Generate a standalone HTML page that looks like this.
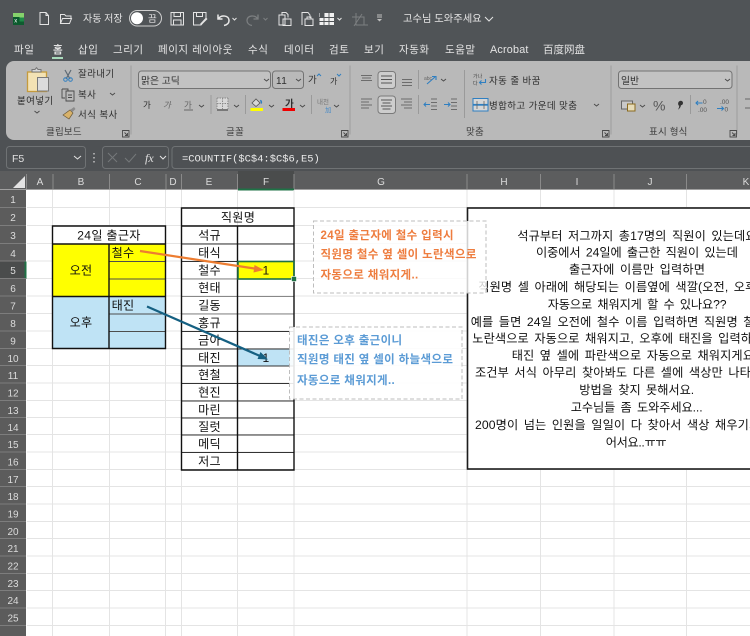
<!DOCTYPE html>
<html lang="ko"><head><meta charset="utf-8"><title>Excel</title>
<style>
html,body{margin:0;padding:0;background:#fff;width:750px;height:636px;overflow:hidden}
svg{display:block;filter:blur(.3px)}
text{font-family:"Liberation Sans","Noto Sans CJK KR",sans-serif;}
.t{fill:#e4e4e4;font-size:10.5px}
.tb{letter-spacing:.55px}
.r{fill:#2e2e2e;font-size:9.5px;letter-spacing:.4px}
.g{fill:#3c3c3c;font-size:9.5px;letter-spacing:.2px}
.h{fill:#dcdcdc;font-size:10px;text-anchor:middle}
.c{fill:#111;font-size:12.1px;letter-spacing:.3px;text-anchor:middle}
.b{fill:#111;font-size:12.2px;letter-spacing:.1px;word-spacing:2px}
.o{fill:#ee7d3f;font-size:11.5px;letter-spacing:.35px;font-weight:700}
.s{fill:#5b9bd5;font-size:11.5px;letter-spacing:.35px;font-weight:700}
.i{fill:none;stroke:#e4e4e4;stroke-width:1}
.k{fill:none;stroke:#4a4a4a;stroke-width:.9}
.d{font-size:6.5px;fill:#555}
</style></head><body>
<svg xmlns="http://www.w3.org/2000/svg" width="750" height="636" viewBox="0 0 750 636">
<rect width="750" height="636" fill="#fff"/>
<!-- title bar -->
<rect width="750" height="146" fill="#505457"/>
<rect x="13" y="13" width="11" height="4.500" fill="#86d26c"/><rect x="13" y="17.500" width="11" height="4" fill="#1f8a48"/><rect x="13" y="21.500" width="11" height="3.500" fill="#0e5c2f"/>
<rect x="13" y="17" width="6.500" height="6.500" fill="#0a5a2c"/>
<text x="14.300" y="22.500" style="font-size:6px;fill:#fff">x</text>
<path class="i" d="M40 12.500h6l2.500 3v9H40zM46 12.500v3h2.500"/>
<path class="i" d="M60.500 23.500v-9h4l1.500 1.500h5v2M60.500 23.500l2-5h9l-2 5z"/>
<text class="t" x="83" y="22" style="font-size:10px">자동 저장</text>
<rect x="129.500" y="10.500" width="32" height="15.500" rx="7.700" fill="none" stroke="#cfcfcf"/>
<circle cx="137" cy="18.300" r="6" fill="#fff"/>
<text class="t" x="148" y="22" style="font-size:9.500px">끔</text>
<path class="i" d="M171 12.500h12.500v12.500H171zM174 12.500v4h6.500v-4M173.500 25v-5h7.500v5"/>
<path class="i" d="M193.500 12.500h12.500v6l-5 6.500h-7.500zM196.500 12.500v4h6v-4"/><path d="M200 24l6-6.500 1.500 1.500-6 6z" fill="#e4e4e4"/>
<path d="M218 14.500v4.500h4.500M218.500 18.500c3-4 10-3 10.500 1.500 .2 3-2 5-5 5.500" fill="none" stroke="#e8e8e8" stroke-width="1.500"/>
<path class="i" d="M232.500 18l2 2 2-2"/>
<path d="M258 14.500v4.500h-4.500M257.500 18.500c-3-4-10-3-10.500 1.500 -.2 3 2 5 5 5.500" fill="none" stroke="#7c7f81" stroke-width="1.300"/>
<path d="M263.500 18l2 2 2-2" fill="none" stroke="#7c7f81"/>
<path class="i" d="M279 15h6v10h-6zM282 15v-2.500h4l2 2v3M283 19h8v6.500h-8z" stroke-width="1.200"/>
<path class="i" d="M302 25v-12.500h6l2 2.500v3M305 19h8v6.500h-8zM307 19v-2h4v2" stroke-width="1.200"/>
<rect x="319.500" y="13" width="14.500" height="12" fill="#f0f0f0"/><path d="M319 17.500h15M319 21.500h15M324 13v12M329 13v12" stroke="#505457" stroke-width=".9"/><path d="M320 13h4v4h-4z" fill="#505457"/>
<path class="i" d="M337.500 18l2 2 2-2"/>
<path d="M352 17h12v8M356 13v12h12M362 14l-8 12" fill="none" stroke="#7c7f81"/>
<path d="M377 15h5M377 17h5" stroke="#bfbfbf"/><path d="M377 19h5l-2.500 2.500z" fill="#bfbfbf"/>
<text class="t" x="403" y="22" style="font-size:10.300px">고수님 도와주세요</text>
<path class="i" d="M485 17l4 4 4-4" stroke-width="1.100"/>
<!-- tabs -->
<g>
<text class="t tb" x="14" y="53">파일</text><text class="t" x="53" y="53" style="font-weight:700">홈</text><text class="t tb" x="78" y="53">삽입</text><text class="t tb" x="113" y="53">그리기</text><text class="t tb" x="158" y="53">페이지 레이아웃</text><text class="t tb" x="248" y="53">수식</text><text class="t tb" x="284" y="53">데이터</text><text class="t tb" x="329" y="53">검토</text><text class="t tb" x="364" y="53">보기</text><text class="t tb" x="399" y="53">자동화</text><text class="t tb" x="445" y="53">도움말</text><text class="t tb" x="490" y="53" style="font-size:10.800px;letter-spacing:.2px">Acrobat</text><text class="t" x="543" y="53" style="font-family:'Noto Sans CJK SC',sans-serif">百度网盘</text>
</g>
<rect x="52" y="57" width="11" height="2" fill="#a8dabb"/>
<!-- ribbon -->
<path d="M750 61H14a8 8 0 0 0-8 8v63a8 8 0 0 0 8 8h736z" fill="#b9b9b9"/>
<path d="M131 65.500v69M350 65.500v69M611 65.500v69M737 65.500v69" stroke="#a2a2a2" stroke-width="1.200"/>
<path d="M464.500 70v48M211 95v19M245.500 95v19M311.500 95v19M418.500 70v19M418.500 95v19M690.500 95v19" stroke="#9a9a9a"/>
<!-- clipboard -->
<rect x="27.500" y="72" width="19" height="19.500" fill="#f3e2b4" stroke="#c59b3d" stroke-width="1.300"/>
<path d="M32 72v-2.500h3l1.500-1.800 1.500 1.800h3V72z" fill="#d9d9d9" stroke="#777"/>
<rect x="37.500" y="77.500" width="11" height="13.500" fill="#dcdcdc" stroke="#7a7a7a"/>
<text class="r" x="17" y="104">붙여넣기</text>
<path class="k" d="M34.500 111l2.500 2 2.500-2"/>
<path d="M65 70l5 9M71 70l-5 9" stroke="#5d6a75" stroke-width="1.200"/><circle cx="65.500" cy="79.500" r="1.800" fill="none" stroke="#2f7fc1"/><circle cx="70.500" cy="79.500" r="1.800" fill="none" stroke="#2f7fc1"/>
<text class="r" x="78" y="77">잘라내기</text>
<path class="k" d="M62 89h6v2M62 89v9h3M66 91h8v10h-8zM68 95h4M68 97.500h4"/>
<text class="r" x="78" y="98">복사</text>
<path class="k" d="M110 93l2.500 2 2.500-2"/>
<path d="M63 115l7-5 3 3-4 6z" fill="#d8b26a" stroke="#6b5a3a" stroke-width=".7"/><path d="M70 110l4-3 1.500 2-3 3z" fill="#8b8b8b"/>
<text class="r" x="78" y="118">서식 복사</text>
<text class="g" x="46" y="135">클립보드</text>
<path class="k" d="M122.500 130.500h6.500v6.500h-6.500zM124.500 132.500l3 3M127.500 133v2.500H125"/>
<!-- font -->
<rect x="138.500" y="71" width="132" height="17.500" rx="3" fill="#c2c2c2" stroke="#737373"/>
<text class="r" x="141" y="84" style="font-size:9.800px;letter-spacing:0">맑은 고딕</text><path class="k" d="M264 79l2.500 2 2.500-2"/>
<rect x="272.500" y="71" width="31" height="17.500" rx="3" fill="#b9b9b9" stroke="#737373"/>
<text class="r" x="276" y="84" style="font-size:10px">11</text><path class="k" d="M296 79l2.500 2 2.500-2"/>
<text class="r" x="308" y="83" style="font-size:9.500px">가</text><path d="M317 76l2-2 2 2" fill="none" stroke="#2f7fc1"/>
<text class="r" x="330" y="84" style="font-size:8px">가</text><path d="M337 74l2 2 2-2" fill="none" stroke="#2f7fc1"/>
<text class="r" x="143" y="108" style="font-size:8.500px">가</text>
<text class="r" x="163" y="108" style="font-size:8.500px;font-style:italic;fill:#666">가</text>
<text class="r" x="184" y="108" style="font-size:8.500px;fill:#666">가</text><path d="M184 110h9" stroke="#666"/>
<path class="k" d="M199 105l2.500 2 2.500-2M234 105l2.500 2 2.500-2M269 105l2.500 2 2.500-2M300 105l2.500 2 2.500-2M334 105l2.500 2 2.500-2"/>
<rect x="217" y="98" width="11" height="11" fill="#d8d8d8"/><path d="M217 98h11M217 103.500h11M222.500 98v11M217 98v11M228 98v11" stroke="#8a8a8a" stroke-dasharray="1.500 1" fill="none"/><path d="M217 110h11" stroke="#555" stroke-width="1.300"/>
<path d="M252 103l4-4 4 4-4 3.500z" fill="#d8d8d8" stroke="#555" stroke-width=".8"/><path d="M260 100a1.500 2 0 1 1 1 4z" fill="#2f7fc1"/><rect x="250.500" y="108" width="12.500" height="3" fill="#ffff00"/>
<text class="r" x="285" y="107" style="font-size:9.500px;font-weight:700">가</text><rect x="282.500" y="108" width="12.500" height="3" fill="#f00000"/>
<text x="317" y="104" style="font-size:6.500px;fill:#777">내천</text><text x="325" y="112" style="font-size:6.500px;fill:#4b8bc5">加</text>
<text class="g" x="226" y="135">글꼴</text>
<path class="k" d="M341.500 130.500h6.500v6.500h-6.500zM343.500 132.500l3 3M346.500 133v2.500H344"/>
<!-- align -->
<path d="M361 75.500h11M362 78h9M361 80.500h11" stroke="#6c6c6c"/>
<rect x="378" y="71.500" width="17.500" height="17" rx="3" fill="#cdcdcd" stroke="#7a7a7a"/><path d="M381 76h11M381 79.500h11M381 83h11" stroke="#555"/>
<path d="M402 79.500h10M402 82.500h10M402 85.500h10" stroke="#6c6c6c"/>
<path d="M427 84l8-7M432 76.500h4v3.500" fill="none" stroke="#2f7fc1" stroke-width="1.100"/><text x="424" y="80" style="font-size:5px;fill:#666">abc</text><path class="k" d="M441 79l2.500 2 2.500-2"/>
<path d="M361 99h11M361 102h8M361 105h11M361 108h8" stroke="#6c6c6c"/>
<rect x="378" y="96" width="17.500" height="17.500" rx="3" fill="#cdcdcd" stroke="#7a7a7a"/><path d="M381 100h11M382.500 103h8M381 106h11M382.500 109h8" stroke="#555"/>
<path d="M401 99h11M404 102h8M401 105h11M404 108h8" stroke="#6c6c6c"/>
<path d="M431 99h6M431 102.500h6M431 106h6M431 109.500h6" stroke="#6c6c6c" stroke-width=".9"/><path d="M424 104.500h6M426 102.500l-2 2 2 2" fill="none" stroke="#2f7fc1"/>
<path d="M451 99h6M451 102.500h6M451 106h6M451 109.500h6" stroke="#6c6c6c" stroke-width=".9"/><path d="M444 104.500h6M448 102.500l2 2-2 2" fill="none" stroke="#2f7fc1"/>
<text x="473" y="78" style="font-size:5px;fill:#444">가나</text><text x="473" y="85" style="font-size:5px;fill:#444">다</text><path d="M485.500 79v3.500h-6M481.500 80.500l-2 2 2 2" fill="none" stroke="#2f7fc1" stroke-width="1.100"/>
<text class="r" x="489" y="84">자동 줄 바꿈</text>
<rect x="473" y="98.500" width="15" height="12.500" fill="#d6d6d6" stroke="#2f7fc1"/><path d="M473 104.800h15" stroke="#2f7fc1" stroke-width="1.800"/><path d="M477 101v8M484 101v8" stroke="#666" stroke-width=".8"/>
<text class="r" x="489" y="109">병합하고 가운데 맞춤</text>
<path class="k" d="M594 104l2.500 2 2.500-2"/>
<text class="g" x="466" y="135">맞춤</text>
<path class="k" d="M602.500 130.500h6.500v6.500h-6.500zM604.500 132.500l3 3M607.500 133v2.500H605"/>
<!-- number -->
<rect x="618.500" y="71" width="113.500" height="17.500" rx="3" fill="#c2c2c2" stroke="#737373"/>
<text class="r" x="621" y="84" style="font-size:9.800px;letter-spacing:0">일반</text><path class="k" d="M725 79l2.500 2 2.500-2"/>
<rect x="621.500" y="101" width="11" height="8" fill="#c9c9c9" stroke="#666"/><rect x="627.500" y="104" width="7.500" height="7" fill="#e7dcb8" stroke="#8a6a1f"/>
<path class="k" d="M640 105l2.500 2 2.500-2"/>
<text x="653" y="110.500" style="font-size:14px;fill:#555">%</text>
<path d="M679 101.500a2.300 2.300 0 1 1 1.900 3.800c-.1 1.800-1 3.200-3 4.400 1-1.500 1.300-2.700 1.300-3.900-1.200-.5-1.600-3-.2-4.300z" fill="#333"/>
<path d="M696 103h6.500M698 101l-2 2 2 2M717 108.500h6.500M721.500 106.500l2 2-2 2" fill="none" stroke="#2f7fc1" stroke-width="1.100"/>
<text class="d" x="703" y="104">0</text><text class="d" x="698" y="112">.00</text>
<text class="d" x="720" y="104">.00</text><text class="d" x="724.500" y="111.500">0</text>
<text class="g" x="649" y="135">표시 형식</text>
<path class="k" d="M730 130.500h6.500v6.500H730zM732 132.500l3 3M735 133v2.500h-2.500"/>
<path d="M745 99h5M745 108h5" stroke="#666"/>
<!-- formula bar -->
<rect y="140" width="750" height="31" fill="#4e5154"/>
<rect x="6.500" y="146.500" width="79" height="22" rx="3" fill="#4e5154" stroke="#6f7274"/>
<text x="12" y="162" style="font-size:10.500px;fill:#e0e0e0">F5</text>
<path class="i" d="M74 156l3.500 3 3.500-3"/>
<path d="M94 153v1.500M94 157v1.500M94 161v1.500" stroke="#ddd" stroke-width="1.200"/>
<rect x="102.500" y="146.500" width="66" height="22" rx="3" fill="#4e5154" stroke="#6f7274"/>
<path d="M108 153l9 9M117 153l-9 9M125 158l4 4 7-8" fill="none" stroke="#75787a"/>
<text x="145" y="162" style="font-size:12px;font-style:italic;fill:#e0e0e0;font-family:'Liberation Serif',serif">fx</text>
<path class="i" d="M160 156l3 3 3-3"/>
<path d="M750 146.500H175a3 3 0 0 0-3 3v16a3 3 0 0 0 3 3h575" fill="#4e5154" stroke="#6f7274"/>
<text x="182" y="161.500" style="font-family:'Liberation Mono',monospace;font-size:10.450px;fill:#ececec">=COUNTIF($C$4:$C$6,E5)</text>
<!-- column headers -->
<rect y="171" width="750" height="19" fill="#5c5d5e"/>
<rect y="190" width="26" height="446" fill="#5c5c5c"/>
<rect x="238" y="171" width="56" height="19" fill="#4a4c4c"/>
<rect y="261.500" width="26" height="17.500" fill="#4a4c4c"/>
<path d="M25 176v12H13z" fill="#e3e3e3"/>
<path d="M26.500 174v16M53 174v16M109.500 174v16M166 174v16M181.500 174v16M237.500 174v16M294 174v16M467 174v16M540.500 174v16M614 174v16M686.500 174v16" stroke="#8a8a8a" fill="none"/>
<path d="M0 189.500h750" stroke="#a0a0a0"/>
<path d="M238 189.500h56" stroke="#1f7246" stroke-width="2"/>
<path d="M25.500 261.500v17.500" stroke="#1f7246" stroke-width="2"/>
<g>
<text class="h" x="40" y="185">A</text><text class="h" x="81" y="185">B</text><text class="h" x="138" y="185">C</text><text class="h" x="173" y="185">D</text><text class="h" x="209" y="185">E</text><text class="h" x="266" y="185">F</text><text class="h" x="381" y="185">G</text><text class="h" x="504" y="185">H</text><text class="h" x="577" y="185">I</text><text class="h" x="650" y="185">J</text><text class="h" x="746" y="185">K</text>
<text class="h" x="13" y="203">1</text><text class="h" x="13" y="221">2</text><text class="h" x="13" y="239">3</text><text class="h" x="13" y="257">4</text><text class="h" x="13" y="274">5</text><text class="h" x="13" y="292">6</text><text class="h" x="13" y="309.500">7</text><text class="h" x="13" y="327">8</text><text class="h" x="13" y="344.500">9</text><text class="h" x="13" y="362">10</text><text class="h" x="13" y="379">11</text><text class="h" x="13" y="396.500">12</text><text class="h" x="13" y="414">13</text><text class="h" x="13" y="431">14</text><text class="h" x="13" y="448">15</text><text class="h" x="13" y="465.500">16</text><text class="h" x="13" y="483">17</text><text class="h" x="13" y="500">18</text><text class="h" x="13" y="517.500">19</text><text class="h" x="13" y="535">20</text><text class="h" x="13" y="552">21</text><text class="h" x="13" y="569.500">22</text><text class="h" x="13" y="587">23</text><text class="h" x="13" y="604">24</text><text class="h" x="13" y="621.500">25</text>
</g>
<path d="M0 207.500h26M0 225.500h26M0 243.500h26M0 261h26M0 278.500h26M0 296h26M0 313.500h26M0 331h26M0 348.500h26M0 365.500h26M0 383h26M0 400.500h26M0 417.500h26M0 434.500h26M0 452h26M0 469.500h26M0 486.500h26M0 504h26M0 521.500h26M0 538.500h26M0 556h26M0 573.500h26M0 590.500h26M0 608h26M0 625.500h26" stroke="#7d7d7d"/>
<!-- grid -->
<path d="M27 207.500h723M27 225.500h723M27 243.500h723M27 261h723M27 278.500h723M27 296h723M27 313.500h723M27 331h723M27 348.500h723M27 365.500h723M27 383h723M27 400.500h723M27 417.500h723M27 434.500h723M27 452h723M27 469.500h723M27 486.500h723M27 504h723M27 521.500h723M27 538.500h723M27 556h723M27 573.500h723M27 590.500h723M27 608h723M27 625.500h723M52.500 190v446M109.500 190v446M165.500 190v446M181.500 190v446M237.500 190v446M294 190v446M467 190v446M540.500 190v446M614 190v446M686.500 190v446" stroke="#e4e4e4" fill="none"/>
<!-- fills -->
<rect x="52.500" y="244" width="113" height="52.500" fill="#ffff00"/>
<rect x="52.500" y="296.500" width="113" height="52" fill="#bfe3f5"/>
<rect x="237.500" y="261.500" width="56.500" height="17.500" fill="#ffff00"/>
<rect x="237.500" y="349" width="56.500" height="17" fill="#bfe3f5"/>
<rect x="52.500" y="226" width="113" height="18" fill="#fff"/>
<!-- table 1 -->
<path d="M109.500 261.500h56M109.500 279h56M109.500 314h56M109.500 331.500h56" stroke="#4d4d4d" fill="none"/>
<path d="M52.500 226h113v122.500h-113zM52.500 244h113M52.500 296.500h113M109 244v104.500" stroke="#111" stroke-width="1.400" fill="none"/>
<text class="c" x="109" y="239.500">24일 출근자</text>
<text class="c" x="81" y="274.500">오전</text>
<text class="c" x="81" y="326.500">오후</text>
<text class="c" x="123" y="257">철수</text>
<text class="c" x="123" y="309.500">태진</text>
<!-- table 2 -->
<path d="M181.500 244h112M181.500 261.500h56M181.500 279h112M181.500 296.500h112M181.500 314h112M181.500 331.500h112M181.500 349h112M181.500 366h112M181.500 383.500h112M181.500 401h112M181.500 418h112M181.500 435h112M181.500 452.500h112" stroke="#333" stroke-width="1" fill="none"/>
<path d="M181.500 279h112M181.500 296.500h112M181.500 314h112" stroke="#888" fill="none"/>
<path d="M181.500 208h112.500v262h-112.500zM181.500 226h112.500M237.500 226v244" stroke="#111" stroke-width="1.400" fill="none"/>
<text class="c" x="238" y="221.500">직원명</text>
<text class="c" x="209.500" y="239.500">석규</text><text class="c" x="209.500" y="257">태식</text><text class="c" x="209.500" y="274.500">철수</text><text class="c" x="209.500" y="292">현태</text><text class="c" x="209.500" y="309.500">길동</text><text class="c" x="209.500" y="327">홍규</text><text class="c" x="209.500" y="344.500">금아</text><text class="c" x="209.500" y="362">태진</text><text class="c" x="209.500" y="379">현철</text><text class="c" x="209.500" y="396.500">현진</text><text class="c" x="209.500" y="414">마린</text><text class="c" x="209.500" y="431">질럿</text><text class="c" x="209.500" y="448">메딕</text><text class="c" x="209.500" y="465.500">저그</text>
<text class="c" x="266" y="274.500">1</text>
<text class="c" x="266" y="362">1</text>
<!-- selection -->
<rect x="238" y="261.500" width="56" height="17.500" fill="none" stroke="#1f7246" stroke-width="1.600"/>
<rect x="291.500" y="276.500" width="5" height="5" fill="#1f7246" stroke="#fff" stroke-width=".6"/>
<!-- H text box -->
<rect x="467.500" y="208" width="340" height="261" fill="#fff" stroke="#1d1d1d" stroke-width="1.600"/>
<g>
<text class="b" x="517.300" y="240">석규부터 저그까지 총17명의 직원이 있는데요</text>
<text class="b" x="536" y="256.500" textLength="202">이중에서 24일에 출근한 직원이 있는데</text>
<text class="b" x="569" y="273.500" textLength="136">출근자에 이름만 입력하면</text>
<text class="b" x="478.300" y="291">직원명 셀 아래에 해당되는 이름옆에 색깔(오전, 오후)</text>
<text class="b" x="547.700" y="308.500" textLength="179">자동으로 채워지게 할 수 있나요??</text>
<text class="b" x="470.700" y="326">예를 들면 24일 오전에 철수 이름 입력하면 직원명 철수</text>
<text class="b" x="472.300" y="342.500">노란색으로 자동으로 채워지고, 오후에 태진을 입력하면</text>
<text class="b" x="511.700" y="359.500">태진 옆 셀에 파란색으로 자동으로 채워지게요</text>
<text class="b" x="475" y="376.500">조건부 서식 아무리 찾아봐도 다른 셀에 색상만 나타</text>
<text class="b" x="579.300" y="394" textLength="115">방법을 찾지 못해서요.</text>
<text class="b" x="570.700" y="411.500" textLength="132">고수님들 좀 도와주세요...</text>
<text class="b" x="475" y="429">200명이 넘는 인원을 일일이 다 찾아서 색상 채우기가</text>
<text class="b" x="605.700" y="446.500" textLength="61">어서요..ㅠㅠ</text>
</g>
<!-- annotations -->
<rect x="313.500" y="221" width="172.500" height="72" fill="#fff" fill-opacity=".8" stroke="#bdbdbd" stroke-dasharray="4 2.500"/>
<text class="o" x="320.500" y="239">24일 출근자에 철수 입력시</text>
<text class="o" x="320.500" y="258">직원명 철수 옆 셀이 노란색으로</text>
<text class="o" x="320.500" y="278.500">자동으로 채워지게..</text>
<rect x="289.500" y="327" width="172.500" height="72" fill="#fff" fill-opacity=".88" stroke="#bdbdbd" stroke-dasharray="4 2.500"/>
<text class="s" x="297" y="344">태진은 오후 출근이니</text>
<text class="s" x="297" y="363">직원명 태진 옆 셀이 하늘색으로</text>
<text class="s" x="297" y="384">자동으로 채워지게..</text>
<!-- arrows -->
<path d="M140 251L256 268.800" stroke="#ed7d31" stroke-width="2.200" fill="none"/>
<path d="M264 270l-10.500 2.500 1-7.500z" fill="#ed7d31"/>
<path d="M147 306.500L260 356" stroke="#156082" stroke-width="2.200" fill="none"/>
<path d="M268 359.500l-10.500-.5 3-7z" fill="#156082"/>
</svg>
</body></html>
